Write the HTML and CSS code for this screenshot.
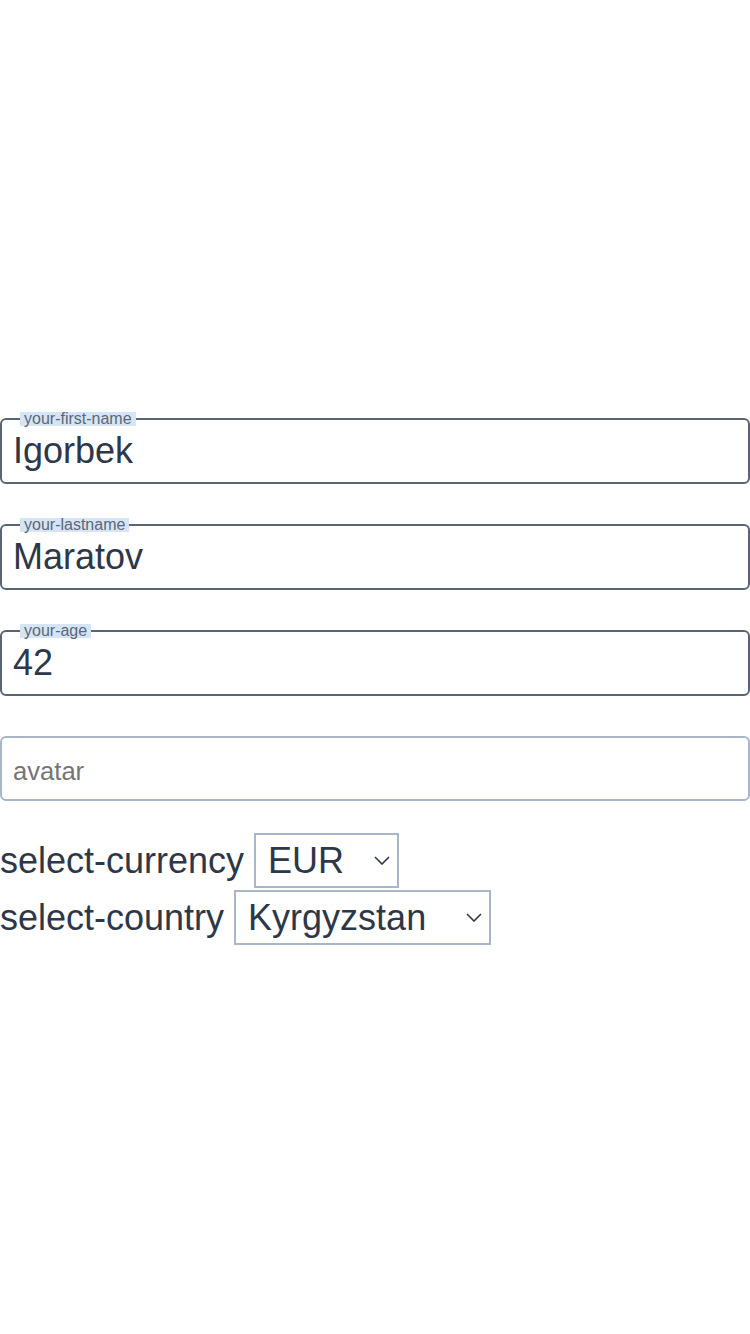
FILE: index.html
```html
<!DOCTYPE html>
<html lang="en">
<head>
<meta charset="utf-8">
<title>Form</title>
<link rel="stylesheet" href="styles.css">
</head>
<body>
<main class="page">
  <form class="form">
    <fieldset class="field">
      <legend class="field-legend">your-first-name</legend>
      <input class="field-input" type="text" value="Igorbek">
    </fieldset>
    <fieldset class="field">
      <legend class="field-legend">your-lastname</legend>
      <input class="field-input" type="text" value="Maratov">
    </fieldset>
    <fieldset class="field">
      <legend class="field-legend">your-age</legend>
      <input class="field-input" type="text" value="42">
    </fieldset>
    <input class="avatar-input" type="text" placeholder="avatar">
    <div class="select-row">
      <label class="select-label" for="cur">select-currency</label>
      <span class="select-wrap">
        <select id="cur" class="select select-currency">
          <option>EUR</option>
          <option>USD</option>
        </select>
        <svg class="chevron" width="16" height="9" viewBox="0 0 16 9"><path d="M1 1l7 7 7-7" fill="none" stroke="#2d3748" stroke-width="1.6"/></svg>
      </span>
    </div>
    <div class="select-row">
      <label class="select-label" for="cty">select-country</label>
      <span class="select-wrap">
        <select id="cty" class="select select-country">
          <option>Kyrgyzstan</option>
          <option>Kazakhstan</option>
        </select>
        <svg class="chevron" width="16" height="9" viewBox="0 0 16 9"><path d="M1 1l7 7 7-7" fill="none" stroke="#2d3748" stroke-width="1.6"/></svg>
      </span>
    </div>
  </form>
</main>
</body>
</html>
```

FILE: styles.css
```css
html, body {
  margin: 0;
  padding: 0;
  background: #ffffff;
}

body {
  font-family: "Liberation Sans", Arial, Helvetica, sans-serif;
  color: #2d3748;
}

.page {
  padding-top: 412px;
}

.form {
  display: flex;
  flex-direction: column;
}

.field {
  margin: 0 0 34px 0;
  padding: 0;
  border: 2px solid #5a6474;
  border-radius: 6px;
  min-width: 0;
}

.field-legend {
  margin-left: 18px;
  padding: 0 4px;
  font-size: 16px;
  line-height: 14px;
  color: #5b6779;
  background: #d6e5f5;
}

.field-input {
  display: block;
  width: 100%;
  box-sizing: border-box;
  height: 56px;
  margin: 0;
  padding: 0 11px 6px 11px;
  border: none;
  outline: none;
  background: transparent;
  font-family: inherit;
  font-size: 36px;
  color: #2d3748;
}

.avatar-input {
  display: block;
  box-sizing: border-box;
  width: 100%;
  height: 65px;
  margin: 6px 0 31px 0;
  padding: 5px 11px 0 11px;
  border: 2px solid #a9b6c8;
  border-radius: 6px;
  outline: none;
  font-family: inherit;
  font-size: 25.6px;
  color: #2d3748;
}

.avatar-input::placeholder {
  color: #757575;
}

.select-row {
  display: flex;
  align-items: center;
  gap: 10px;
  height: 57px;
}

.select-label {
  font-size: 36px;
  color: #2d3748;
}

.select-wrap {
  position: relative;
  display: inline-block;
}

.select {
  appearance: none;
  -webkit-appearance: none;
  display: block;
  box-sizing: border-box;
  height: 55px;
  margin: 0;
  padding: 0 12px;
  border: 2px solid #a9b6c8;
  border-radius: 0;
  background: #ffffff;
  font-family: inherit;
  font-size: 36px;
  color: #2d3748;
}

.select-currency {
  width: 145px;
}

.select-country {
  width: 257px;
}

.chevron {
  position: absolute;
  right: 9px;
  top: 23px;
  pointer-events: none;
}
```
